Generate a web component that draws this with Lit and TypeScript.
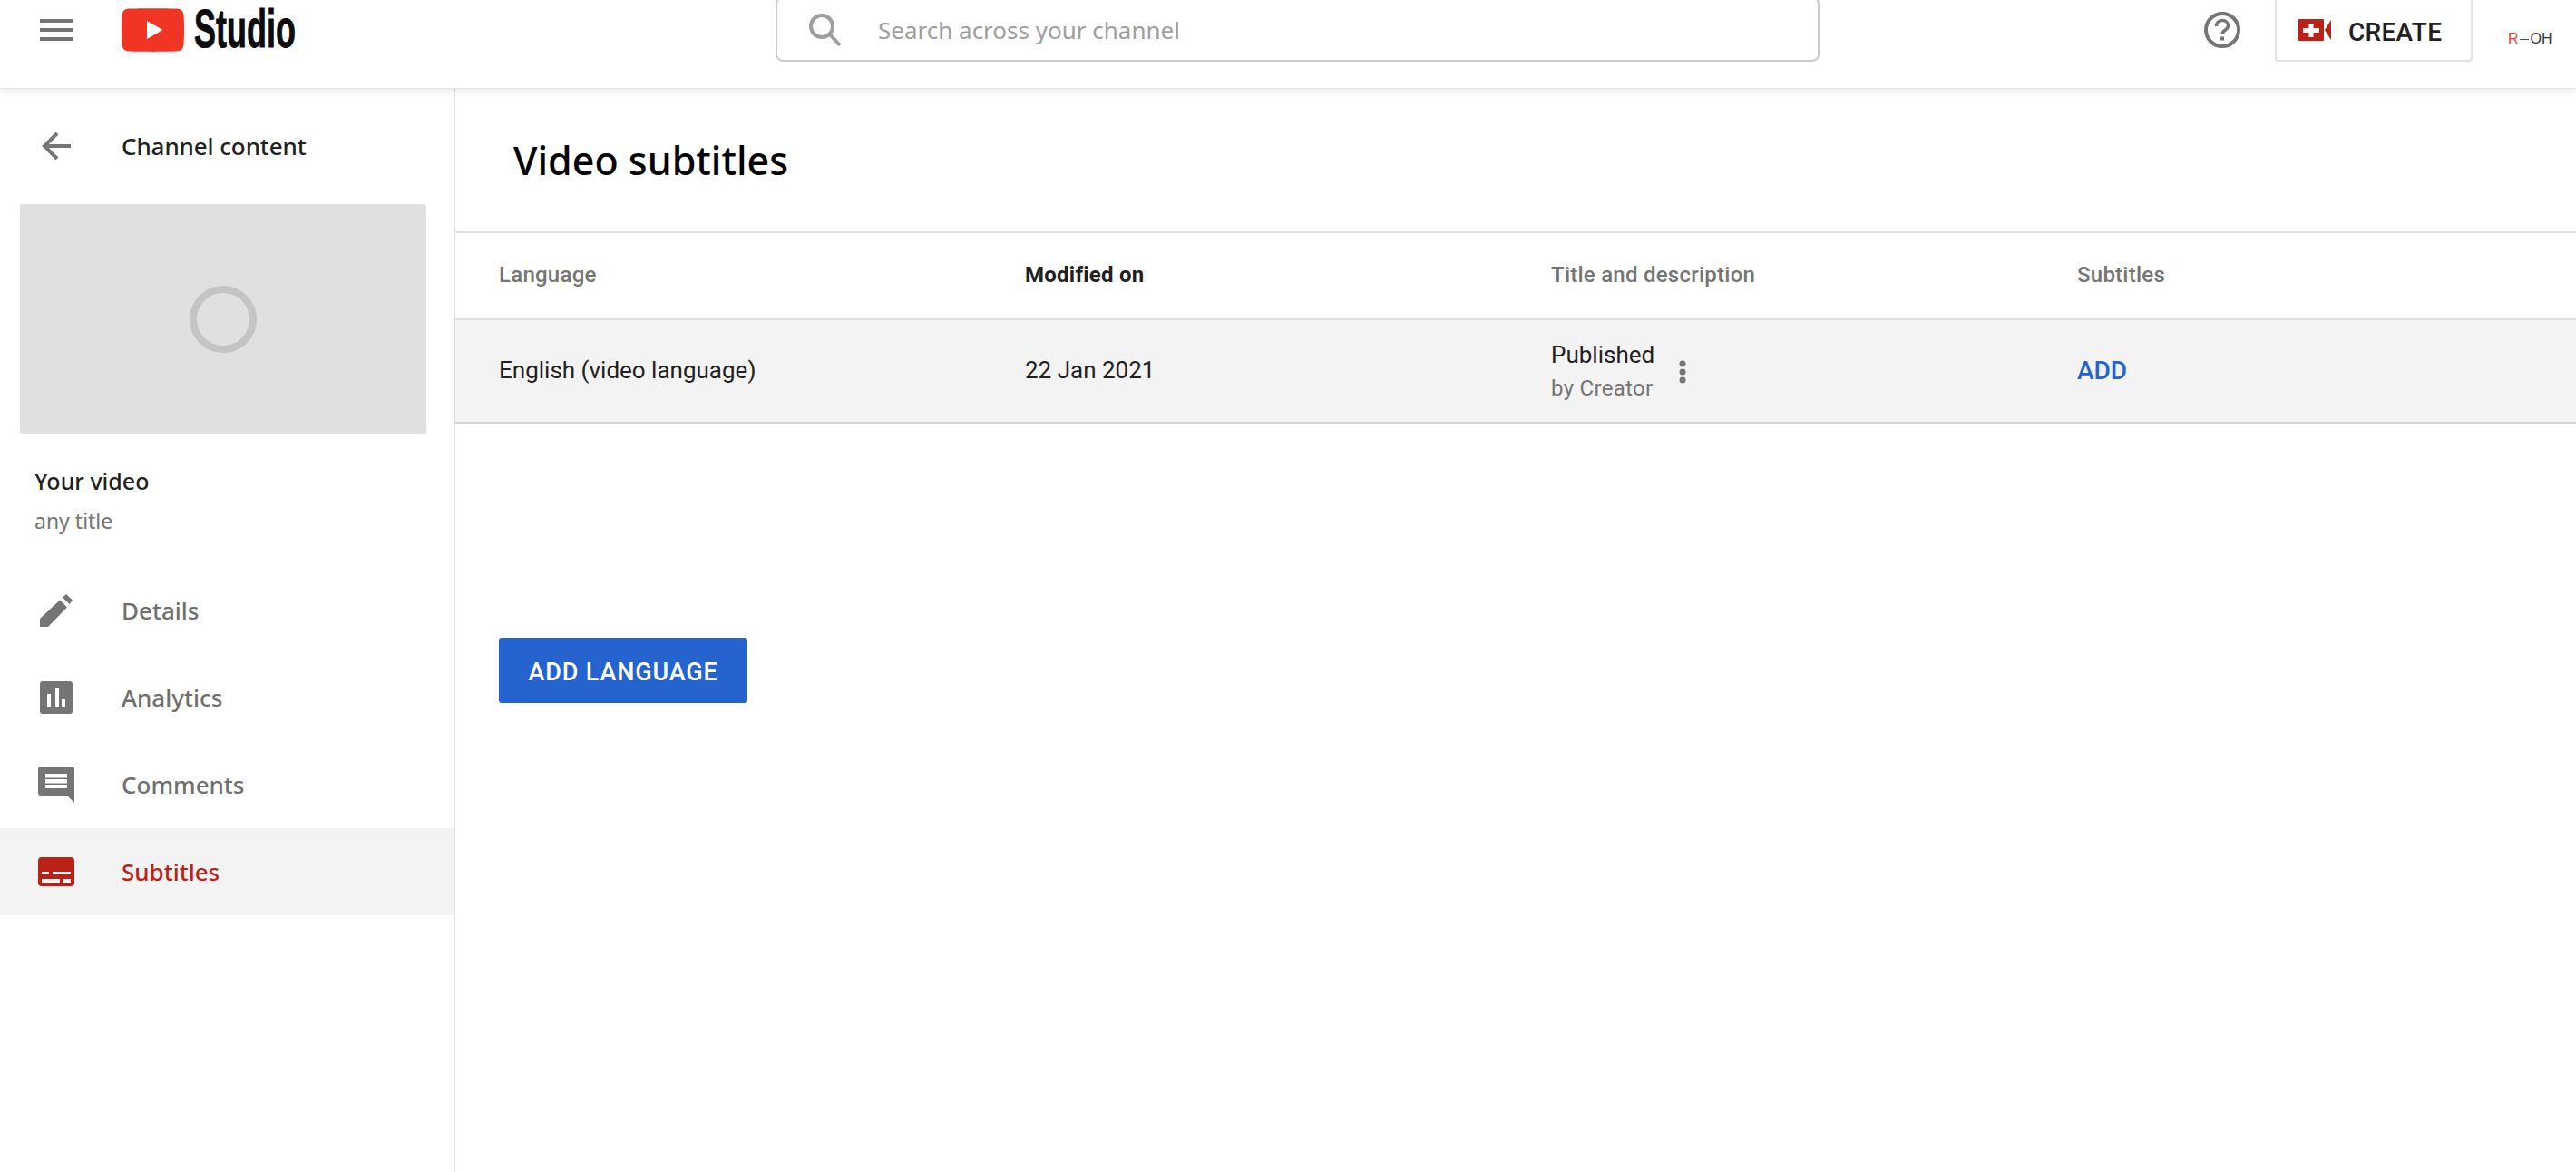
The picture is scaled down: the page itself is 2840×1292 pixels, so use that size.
import { LitElement, html, css } from "lit";
import { customElement } from "lit/decorators.js";

@customElement("app-root")
export class AppRoot extends LitElement {
  static styles = css`
    :host { display: block; width: 2840px; height: 1292px; overflow: hidden; background: #fff; font-family: "Noto Sans", sans-serif; color: #212121; position: relative; }
    * { box-sizing: border-box; }
    svg { display: block; flex: none; }
    header { height: 97px; display: flex; align-items: flex-start; position: relative; z-index: 2; background: #fff; box-shadow: 0 1px 0 #e4e4e4, 0 3px 10px rgba(0,0,0,.10); }
    .menu { margin: 21px 0 0 44px; }
    .logo { margin: 9px 0 0 54px; }
    .studio { margin: 0 -77px 0 11px; width: 189px; height: 64px; line-height: 64px; font-family: "Liberation Sans", sans-serif; font-weight: 700; font-size: 60px; color: #0c0c0c; white-space: nowrap; transform-origin: left center; transform: scaleX(.6); -webkit-text-stroke: 1px #0c0c0c; }
    .search { margin: -4px 0 0 529px; width: 1151px; height: 72px; border: 2px solid #ccc; border-radius: 8px; display: flex; align-items: center; padding: 2px 0 0 35px; gap: 40px; color: #9e9e9e; font-size: 26px; }
    .help { margin: 13px 0 0 424px; }
    .create { margin: -4px 0 0 38px; width: 218px; height: 72px; border: 2px solid #e2e2e2; border-radius: 4px; display: flex; align-items: center; padding: 6px 0 0 24px; gap: 19px; font: 500 28px Roboto, sans-serif; letter-spacing: .3px; color: #212121; }
    .create svg { margin-top: -4px; }
    .avatar { margin: 34px 0 0 39px; display: flex; align-items: center; font: 400 16px "Liberation Sans", sans-serif; color: #333; white-space: nowrap; }
    .avatar b { font-weight: 400; color: #e9453d; }
    .avatar i { display: block; width: 10px; height: 1px; margin: 0 2px 0 1px; background: #555; }
    .body { display: flex; height: 1195px; }
    aside { width: 502px; flex: none; border-right: 2px solid #e0e0e0; padding-top: 32px; }
    .back { height: 64px; display: flex; align-items: center; padding-left: 46px; gap: 56px; font-size: 26px; font-weight: 500; color: #212121; letter-spacing: -.1px; }
    .thumb { margin: 32px 0 0 22px; width: 448px; height: 253px; background: #e0e0e0; border-radius: 3px; display: flex; align-items: center; justify-content: center; }
    .vid { padding: 35px 0 0 38px; height: 147px; }
    .vid div:first-child { font-size: 25px; font-weight: 500; line-height: 34px; color: #212121; }
    .vid div:last-child { font-size: 23px; line-height: 34px; margin-top: 10px; color: #757575; }
    nav a { height: 96px; display: flex; align-items: center; font-size: 26px; font-weight: 500; color: #6f6f6f; }
    nav a.on { background: #f3f3f3; color: #bc2117; }
    nav .ic { width: 134px; padding-left: 42px; flex: none; display: flex; }
    .pen { margin-left: 2px; }
    main { flex: 1; min-width: 0; }
    h1 { margin: 0; height: 160px; padding: 54px 0 0 64px; font-size: 43px; line-height: 52px; font-weight: 500; color: #000; border-bottom: 2px solid #e0e0e0; }
    .row { display: grid; grid-template-columns: repeat(4, 580px); padding-left: 48px; align-items: center; }
    .head { height: 96px; border-bottom: 2px solid #dcdcdc; font: 500 24px Roboto, sans-serif; letter-spacing: .25px; color: #757575; padding-bottom: 2px; }
    .head .sorted { color: #212121; font-weight: 700; }
    .data { height: 114px; background: #f3f3f3; border-bottom: 2px solid #d4d4d4; font: 400 26px Roboto, sans-serif; color: #212121; padding-bottom: 2px; }
    .pub { display: flex; align-items: center; gap: 27px; margin-top: 3px; }
    .pub small { display: block; font-size: 24px; letter-spacing: .3px; line-height: 30px; color: #757575; margin-top: 7px; }
    .pub span { display: block; line-height: 30px; }
    .add { color: #2563cf; font-weight: 500; font-size: 28px; }
    .action { margin: 236px 0 0 48px; width: 274px; height: 72px; padding-top: 3px; border-radius: 3px; background: #2563cf; color: #fff; font: 500 27px Roboto, sans-serif; letter-spacing: .85px; display: flex; align-items: center; justify-content: center; }
  `;

  render() {
    return html`
      <header>
        <svg class="menu" width="36" height="24" viewBox="0 0 36 24" fill="#757575"><rect width="36" height="4"/><rect y="10" width="36" height="4"/><rect y="20" width="36" height="4"/></svg>
        <svg class="logo" width="69" height="48" viewBox="0 0 69 48"><path fill="#f03525" d="M8 0.5C20 0 49 0 61 .5C65.500 .8 68 3 68.500 8C69.200 18 69.200 30 68.500 40C68 45 65.500 47.200 61 47.500C49 48 20 48 8 47.500C3.500 47.200 1 45 .5 40C-.2 30 -.2 18 .5 8C1 3 3.500 .8 8 .5Z"/><path fill="#fff" d="M28 14L45.500 24L28 34Z"/></svg>
        <div class="studio">Studio</div>
        <div class="search">
          <svg width="36" height="36" viewBox="0 0 36 36" fill="none" stroke="#9e9e9e" stroke-width="4"><circle cx="14" cy="14" r="12"/><path d="M23 23L34 35"/></svg>
          <span>Search across your channel</span>
        </div>
        <svg class="help" width="40" height="40" viewBox="0 0 40 40" fill="none" stroke="#757575"><circle cx="20" cy="20" r="18" stroke-width="4"/><path stroke-width="3.600" d="M13.500 16c0-4 3-6.500 6.500-6.500s6.500 2.500 6.500 6c0 4.500-6.500 4.500-6.500 9.500"/><path stroke-width="4" d="M20 27.500V31.500"/></svg>
        <div class="create">
          <svg width="36" height="24" viewBox="0 0 36 24"><path fill="#bc2117" d="M1 0H27a1 1 0 0 1 1 1V23a1 1 0 0 1-1 1H1a1 1 0 0 1-1-1V1A1 1 0 0 1 1 0Z"/><path fill="#bc2117" d="M29 12L36 1V23Z"/><path fill="#fff" d="M11.500 5H16.500V10H23V15H16.500V20H11.500V15H5V10H11.500Z"/></svg>
          <span>CREATE</span>
        </div>
        <div class="avatar"><b>R</b><i></i>OH</div>
      </header>
      <div class="body">
        <aside>
          <div class="back">
            <svg width="32" height="32" viewBox="0 0 32 32" fill="none" stroke="#757575" stroke-width="4"><path d="M32 16H3M17 2L3 16L17 30"/></svg>
            <span>Channel content</span>
          </div>
          <div class="thumb"><svg width="74" height="74" viewBox="0 0 74 74" fill="none" stroke="#c4c4c4" stroke-width="8"><circle cx="37" cy="37" r="33"/></svg></div>
          <div class="vid"><div>Your video</div><div>any title</div></div>
          <nav>
            <a><span class="ic"><svg class="pen" width="36" height="36" viewBox="0 0 36 36" fill="#757575"><path d="M0 36V27L22 6.500L30 14.500L9 36Z"/><path d="M25 3.500L29 0L36 6.500L32.500 11Z"/></svg></span>Details</a>
            <a><span class="ic"><svg class="pen" width="36" height="36" viewBox="0 0 36 36"><rect width="36" height="36" rx="3" fill="#757575"/><path fill="#fff" d="M8 14H12V28H8ZM17 7H21V28H17ZM24 20H28V28H24Z"/></svg></span>Analytics</a>
            <a><span class="ic"><svg width="40" height="40" viewBox="0 0 40 40"><path fill="#757575" d="M3 0H37a3 3 0 0 1 3 3V40L32 32H3a3 3 0 0 1-3-3V3A3 3 0 0 1 3 0Z"/><path fill="#fff" d="M8 8H32V12.500H8ZM8 14H32V18.500H8ZM8 20H32V24H8Z"/></svg></span>Comments</a>
            <a class="on"><span class="ic"><svg width="40" height="32" viewBox="0 0 40 32"><rect width="40" height="32" rx="4" fill="#bc2117"/><path fill="#fff" d="M4 16H12V19H4ZM16 16H36V19H16ZM4 24H24V28H4ZM28 24H36V28H28Z"/></svg></span>Subtitles</a>
          </nav>
        </aside>
        <main>
          <h1>Video subtitles</h1>
          <div class="row head"><div>Language</div><div class="sorted">Modified on</div><div>Title and description</div><div>Subtitles</div></div>
          <div class="row data">
            <div>English (video language)</div>
            <div>22 Jan 2021</div>
            <div class="pub">
              <div><span>Published</span><small>by Creator</small></div>
              <svg width="8" height="26" viewBox="0 0 8 26" fill="#757575"><circle cx="4" cy="4" r="3.500"/><circle cx="4" cy="13" r="3.500"/><circle cx="4" cy="22" r="3.500"/></svg>
            </div>
            <div class="add">ADD</div>
          </div>
          <div class="action">ADD LANGUAGE</div>
        </main>
      </div>
    `;
  }
}
